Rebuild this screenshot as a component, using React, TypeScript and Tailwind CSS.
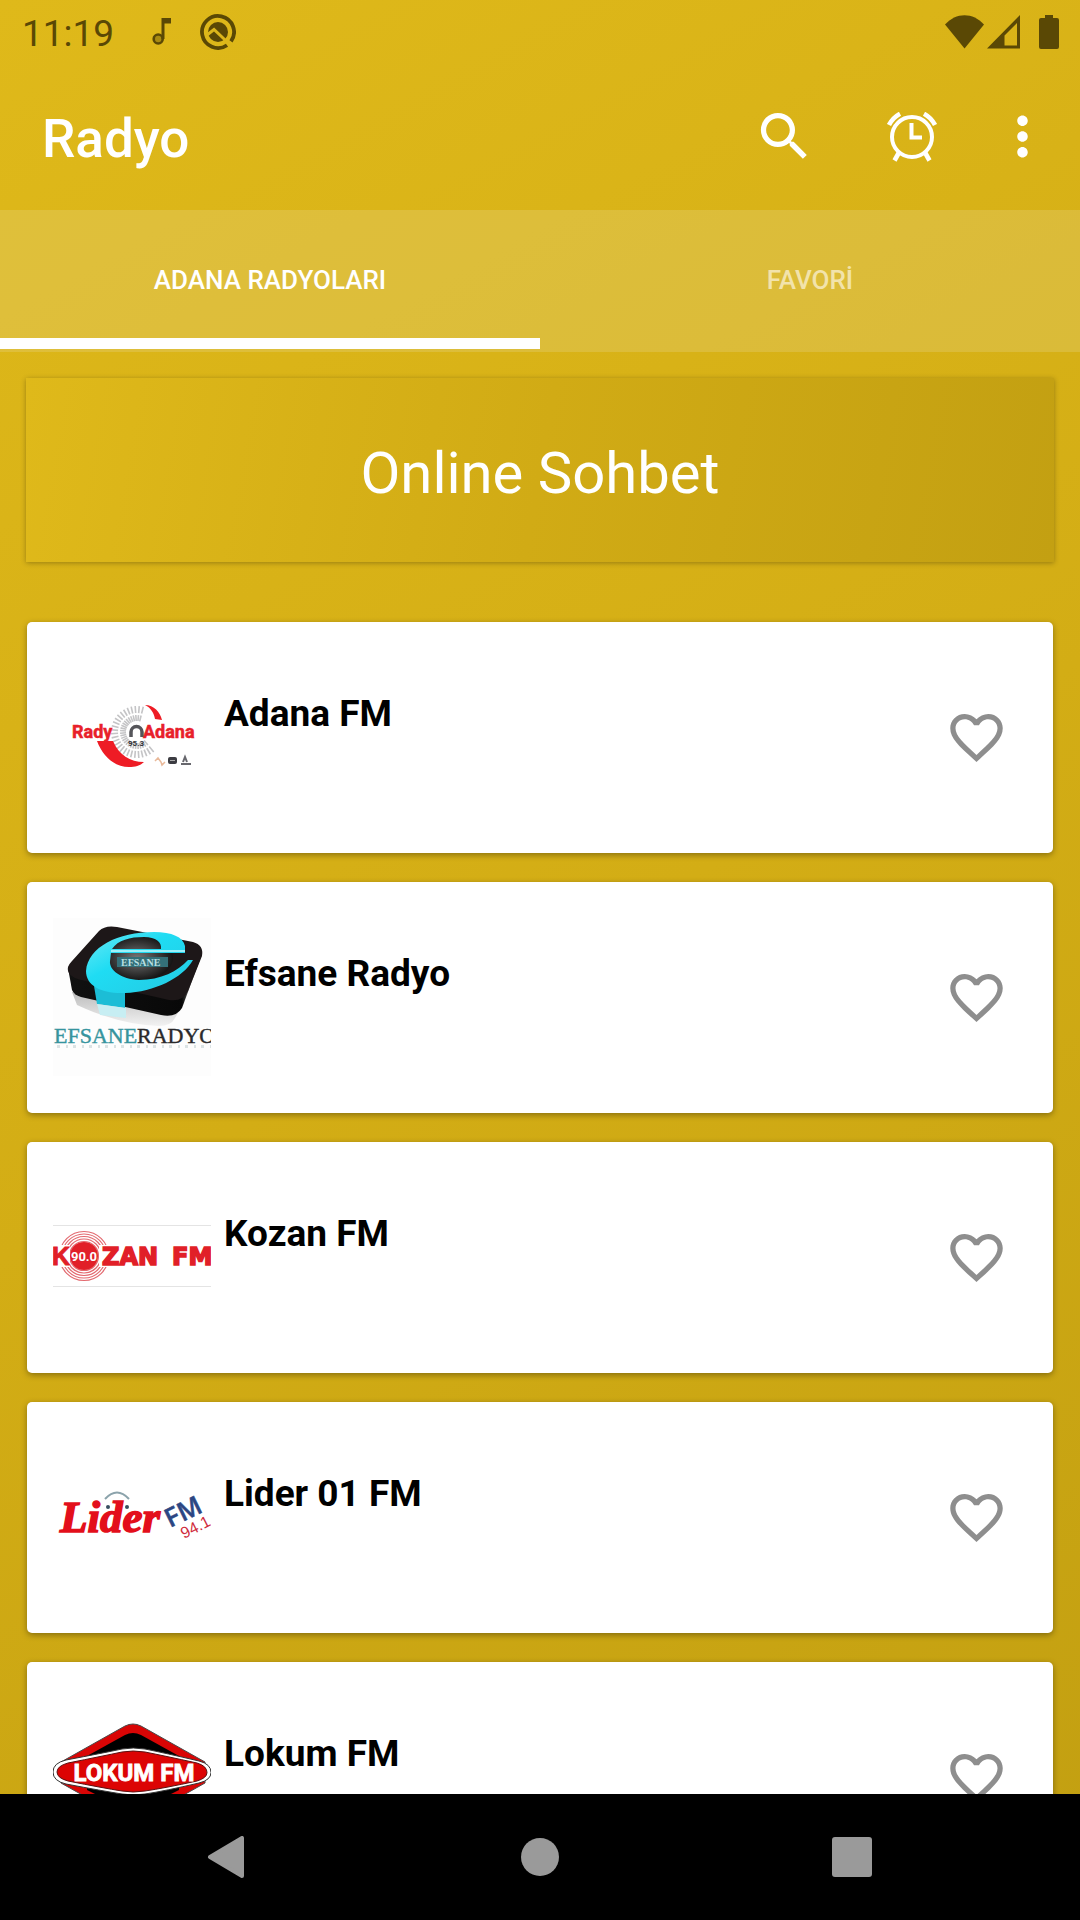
import { useState } from 'react';
import type { ReactNode } from 'react';
import { MdFavorite, MdFavoriteBorder, MdMoreVert, MdSearch } from 'react-icons/md';

interface Station {
  id: string;
  name: string;
  logo: ReactNode;
}

const fanTicks = Array.from({ length: 27 }, (_, i) => 50 + i * 9);

function AdanaLogo() {
  return (
    <svg viewBox="0 0 158 158" className="size-full" aria-hidden="true">
      <g stroke="#c4c4c6" strokeWidth="1.6">
        {fanTicks.map((deg) => (
          <g key={deg} transform={`rotate(${deg} 84 74)`}>
            <path d="M95 74h6M103 74h7" />
          </g>
        ))}
      </g>
      <path d="M44 83c6 16 18 26 32 26 6 0 11-1 15-5-14 0-25-7-31-21z" fill="#ee1c25" />
      <path d="M92 47c9 0 15 7 17 15l-7-1c-1-6-4-11-10-14z" fill="#ee1c25" />
      <path d="M78 79v-5a5 5 0 0 1 11 0v5" fill="none" stroke="#55555a" strokeWidth="3.500" />
      <text x="75" y="88" fill="#333338" className="font-['Roboto'] text-[8px] font-bold">
        95.3
      </text>
      <g fill="#e8202a" stroke="#e8202a" strokeWidth=".5" className="font-['Roboto'] text-[18px] font-bold">
        <text x="19" y="80">Rady</text>
        <text x="90" y="80">Adana</text>
      </g>
      <path d="M102 103l3-3 3 4 1 3 3-3" fill="none" stroke="#e9b99a" strokeWidth="1.5" />
      <rect x="115" y="99" width="9" height="7" rx="2" fill="#3c3c42" />
      <path d="M117 102.500h5" stroke="#aaa" />
      <path d="M128 106h10M130 104l2-5 2 5" stroke="#67676d" strokeWidth="2" fill="none" />
    </svg>
  );
}

function EfsaneLogo() {
  return (
    <svg viewBox="0 0 158 158" className="size-full" aria-hidden="true">
      <defs>
        <linearGradient id="efsaneCyan" x1="0" y1="0" x2="1" y2="1">
          <stop offset="0" stopColor="#6be9f5" />
          <stop offset=".4" stopColor="#1fdcf3" />
          <stop offset="1" stopColor="#25c9e2" />
        </linearGradient>
        <linearGradient id="efsaneSide" x1="0" y1="0" x2="1" y2="0">
          <stop offset="0" stopColor="#111" />
          <stop offset=".85" stopColor="#080808" />
          <stop offset=".93" stopColor="#777" />
          <stop offset="1" stopColor="#222" />
        </linearGradient>
        <linearGradient id="efsaneReflection" x1="0" y1="0" x2="0" y2="1">
          <stop offset="0" stopColor="#bcbcbc" />
          <stop offset="1" stopColor="#f2f2f2" />
        </linearGradient>
        <radialGradient id="efsaneCore">
          <stop offset="0" stopColor="#777" />
          <stop offset="1" stopColor="#141414" />
        </radialGradient>
      </defs>
      <rect width="158" height="158" fill="#fdfdfd" />
      <path d="M19 74L24 87C50 99 78 107 106 108Q118 108 122 100L128 90z" fill="url(#efsaneReflection)" />
      <path d="M15 50L19 72Q21 77 28 79L108 97Q123 100 129 90L149 36z" fill="url(#efsaneSide)" />
      <path
        d="M46 13Q52 7 64 9L140 24Q151 27 149 38L135 73Q130 84 116 82L28 62Q13 58 15 49Q16 46 19 43z"
        fill="#1d1718"
      />
      <ellipse cx="84" cy="40" rx="36" ry="23" fill="url(#efsaneCore)" />
      <path d="M41 68L44 86 72 90V72z" fill="#1cbdd6" />
      <path d="M44 86L47 97 73 100V90z" fill="#c7eef3" />
      <path
        fillRule="evenodd"
        d="M132 35V28C130 19 119 14 101 14C65 14 35 29 33 53C33 68 49 76 72 75C101 74 130 60 140 42L135 42C125 53 108 62 86 62C68 61 56 52 57 43L58 35zM59 31C65 22 77 19 91 19C103 19 109 24 108 31z"
        fill="url(#efsaneCyan)"
      />
      <path d="M58 33H132" stroke="#c5f8fc" strokeWidth="1.5" />
      <rect x="64" y="39" width="51" height="10" fill="#347078" />
      <text x="68" y="48" fill="#b8dfe2" className="font-['Liberation_Serif'] text-[10px] font-bold">
        EFSANE
      </text>
      <g strokeWidth=".4" className="font-['Liberation_Serif'] text-[22px]">
        <text x="1" y="125" fill="#36949e" stroke="#36949e">
          EFSANE
        </text>
        <text x="84" y="125" fill="#29292b" stroke="#29292b">
          RADYO
        </text>
      </g>
      <path d="M4 128.500H158" stroke="#8fa9ac" strokeWidth="3" strokeDasharray="3 6 2 5" opacity=".3" />
    </svg>
  );
}

function KozanLogo() {
  return (
    <svg viewBox="0 0 158 158" className="size-full" aria-hidden="true">
      <path d="M0 47.500H158M0 108.500H158" stroke="#e4e4e4" />
      <g fill="none" stroke="#e36a70" strokeWidth="1.2">
        <circle cx="31" cy="78" r="24.500" />
        <circle cx="31" cy="78" r="22" />
        <circle cx="31" cy="78" r="19.500" />
        <circle cx="31" cy="78" r="17" />
        <circle cx="31" cy="78" r="14.500" />
      </g>
      <path d="M0 67H17V89H0zM46 67H158V89H46z" fill="#fff" />
      <circle cx="31" cy="78" r="14" fill="#e11f28" />
      <g fill="#e11f28" stroke="#e11f28" className="font-['Liberation_Sans'] text-[25px] font-bold">
        <text x="-1" y="87">K</text>
        <g strokeWidth="1.6" className="font-['DejaVu_Sans'] text-[24px]">
          <text x="49" y="87">ZAN</text>
          <text x="119" y="87">FM</text>
        </g>
      </g>
      <text x="31" y="83" textAnchor="middle" fill="#fff" className="font-['Roboto'] text-[13px] font-bold">
        90.0
      </text>
    </svg>
  );
}

function LiderLogo() {
  return (
    <svg viewBox="0 0 158 158" className="size-full" aria-hidden="true">
      <path d="M52 61Q64 48 76 61" fill="none" stroke="#8ba3ab" strokeWidth="2" />
      <text
        x="7"
        y="94"
        fill="#e30f1b"
        stroke="#e30f1b"
        strokeWidth="1.6"
        className="font-['Liberation_Serif'] text-[45px] font-bold italic"
      >
        Lider
      </text>
      <circle cx="55" cy="69" r="2" fill="#384e60" />
      <circle cx="74" cy="69" r="2" fill="#384e60" />
      <g transform="translate(117 90) rotate(-26)">
        <text fill="#2b4683" stroke="#2b4683" strokeWidth=".5" className="font-['Open_Sans'] text-[26px] font-semibold">
          FM
        </text>
      </g>
      <g transform="translate(131 101) rotate(-27)">
        <text fill="#cf2a3b" className="font-['Liberation_Sans'] text-[16px]">
          94.1
        </text>
      </g>
    </svg>
  );
}

function LokumLogo() {
  return (
    <svg viewBox="0 0 158 158" className="size-full" aria-hidden="true">
      <path
        d="M72 28Q80 24 88 28L152 64V85L88 121Q80 125 72 121L8 85V64z"
        fill="#d90505"
        stroke="#4a4a4a"
        strokeWidth="1"
      />
      <path d="M72 37Q80 33 88 37L126 58V92L80 115 34 92V58z" fill="#000" />
      <path
        d="M13 62Q50 55 69 51Q80 49 92 51Q112 55 146 63Q158 66 158 74.500Q158 82 146 85Q112 93 92 96Q80 98 69 96Q50 93 13 86Q0 83 0 74Q0 65 13 62z"
        fill="#fff"
        stroke="#333"
        strokeWidth="1"
      />
      <path
        d="M15 65Q50 58 69 54Q80 52 92 54Q112 58 144 65Q154 68 154 74.500Q154 80 144 83Q112 90 92 93Q80 95 69 93Q50 90 15 83Q4 80 4 74Q4 68 15 65z"
        fill="#dc0404"
        stroke="#5b1111"
        strokeWidth="1"
      />
      <text
        x="81"
        y="83"
        textAnchor="middle"
        fill="#fff"
        stroke="#fff"
        strokeWidth=".8"
        className="font-['Roboto'] text-[24px] font-bold"
      >
        LOKUM FM
      </text>
    </svg>
  );
}

const stations: Station[] = [
  { id: 'adana', name: 'Adana FM', logo: <AdanaLogo /> },
  { id: 'efsane', name: 'Efsane Radyo', logo: <EfsaneLogo /> },
  { id: 'kozan', name: 'Kozan FM', logo: <KozanLogo /> },
  { id: 'lider', name: 'Lider 01 FM', logo: <LiderLogo /> },
  { id: 'lokum', name: 'Lokum FM', logo: <LokumLogo /> },
];

const tabs = [
  { id: 'all', label: 'ADANA RADYOLARI' },
  { id: 'favorites', label: 'FAVORİ' },
] as const;

function StatusBar() {
  return (
    <div className="flex h-[63px] shrink-0 items-center justify-between pr-[21px] pl-[22px] text-[#5a4805]">
      <div className="flex items-center">
        <span className="pt-1 text-[37px] leading-none">11:19</span>
        <svg viewBox="0 0 20 27" className="ml-[38px] h-[27px] w-5" aria-hidden="true">
          <circle cx="6.200" cy="21" r="4.500" fill="currentColor" fillOpacity=".4" stroke="currentColor" strokeWidth="2.600" />
          <path d="M9.500 0H19v5.500h-6.500V21h-3z" fill="currentColor" />
        </svg>
        <svg viewBox="0 0 36 36" className="ml-7 size-9" aria-hidden="true">
          <path d="M27 31.200A16 16 0 1 1 31 27.300" fill="none" stroke="currentColor" strokeWidth="3.800" />
          <circle cx="18" cy="18" r="10" fill="currentColor" />
          <path d="M7 21L14 15.500 32 32.500" fill="none" stroke="#dcb61b" strokeWidth="3" />
        </svg>
      </div>
      <div className="flex items-center">
        <svg viewBox="0 0 39 34" className="h-[34px] w-[39px]" aria-hidden="true">
          <path d="M0 9.500C11-3 28-3 39 9.500L19.500 33.500z" fill="currentColor" />
        </svg>
        <svg viewBox="0 0 33 34" className="ml-[3px] h-[34px] w-[33px]" aria-hidden="true">
          <path
            fillRule="evenodd"
            d="M33 0V33.500H0zM30 8L17.500 20.500V30.500H30z"
            fill="currentColor"
          />
        </svg>
        <svg viewBox="0 0 20 34" className="ml-[19px] h-[34px] w-5" aria-hidden="true">
          <path d="M6 0h8v3h4q2 0 2 2v27q0 2-2 2H2q-2 0-2-2V5q0-2 2-2h4z" fill="currentColor" />
        </svg>
      </div>
    </div>
  );
}

function AlarmIcon() {
  return (
    <svg
      viewBox="0 0 50 50"
      className="size-[50px]"
      fill="none"
      stroke="currentColor"
      strokeWidth="4"
      aria-hidden="true"
    >
      <circle cx="25" cy="25" r="20" />
      <path d="M24.500 11V25.500H35" />
      <path d="M2 13Q6 5.500 13 1.800M48 13Q44 5.500 37 1.800" strokeWidth="4.600" />
      <path d="M12 40.500L7.500 48.500M38 40.500L42.500 48.500" strokeWidth="4.600" />
    </svg>
  );
}

function AppBar() {
  return (
    <header className="flex h-[147px] shrink-0 items-center pr-[11px] pl-[42px]">
      <h1 className="flex-1 pt-[5px] text-[53px] leading-none font-medium">Radyo</h1>
      <button type="button" aria-label="Ara" className="flex h-32 w-32 items-center justify-center">
        <MdSearch className="size-[63px]" />
      </button>
      <button type="button" aria-label="Alarm" className="flex h-32 w-32 items-center justify-center">
        <AlarmIcon />
      </button>
      <button type="button" aria-label="Menü" className="flex h-32 w-[93px] items-center justify-center">
        <MdMoreVert className="size-[63px]" />
      </button>
    </header>
  );
}

function NavBar() {
  return (
    <nav className="flex h-[126px] shrink-0 bg-black px-[72px] text-[#9a9a9a]">
      <button type="button" aria-label="Geri" className="flex flex-1 items-center justify-center">
        <svg viewBox="0 0 42 42" className="size-[42px]" aria-hidden="true">
          <path
            d="M3 21L35 2V40z"
            fill="currentColor"
            stroke="currentColor"
            strokeWidth="4"
            strokeLinejoin="round"
          />
        </svg>
      </button>
      <button type="button" aria-label="Ana ekran" className="flex flex-1 items-center justify-center">
        <span className="size-[38px] rounded-full bg-current" />
      </button>
      <button type="button" aria-label="Son uygulamalar" className="flex flex-1 items-center justify-center">
        <span className="size-10 rounded-[3px] bg-current" />
      </button>
    </nav>
  );
}

interface StationCardProps {
  station: Station;
  favorite: boolean;
  onToggle: () => void;
}

function StationCard({ station, favorite, onToggle }: StationCardProps) {
  const Heart = favorite ? MdFavorite : MdFavoriteBorder;

  return (
    <li className="flex h-[231px] shrink-0 items-center rounded-[5px] bg-white pr-[45px] pb-px pl-[26px] shadow-[0_2px_6px_rgba(0,0,0,0.35)]">
      <div className="size-[158px] shrink-0">{station.logo}</div>
      <h2 className="ml-[13px] h-[158px] flex-1 pt-[33px] text-[37px] leading-[46px] font-bold text-black">
        {station.name}
      </h2>
      <button type="button" aria-label="Favori" aria-pressed={favorite} onClick={onToggle}>
        <Heart className="size-[63px] text-[#8e8e8e]" />
      </button>
    </li>
  );
}

export default function App() {
  const [activeTab, setActiveTab] = useState<'all' | 'favorites'>('all');
  const [favorites, setFavorites] = useState<string[]>([]);

  const toggleFavorite = (id: string) => {
    setFavorites((prev) => (prev.includes(id) ? prev.filter((x) => x !== id) : [...prev, id]));
  };

  const visible = activeTab === 'all' ? stations : stations.filter((s) => favorites.includes(s.id));

  return (
    <div className="flex h-screen flex-col overflow-hidden bg-[linear-gradient(151deg,#dfb91a_0%,#d3ad15_50%,#c29f11_100%)] font-['Roboto',sans-serif] text-white">
      <StatusBar />
      <AppBar />
      <div role="tablist" className="flex shrink-0 bg-[#e9dc9f]/25 pb-[3px]">
        {tabs.map((tab) => (
          <button
            key={tab.id}
            type="button"
            role="tab"
            aria-selected={activeTab === tab.id}
            onClick={() => setActiveTab(tab.id)}
            className="relative h-[139px] flex-1 pt-0.5 text-[26px] font-medium text-[#f2e3ab] aria-selected:text-white"
          >
            {tab.label}
            {activeTab === tab.id && <span className="absolute inset-x-0 bottom-0 h-[11px] bg-white" />}
          </button>
        ))}
      </div>
      <main className="min-h-0 flex-1 overflow-y-auto px-[26px] pt-[26px] [scrollbar-width:none]">
        <a
          href="#sohbet"
          className="flex h-[184px] items-center justify-center bg-[linear-gradient(100deg,#dfb91a_0%,#d1ab15_50%,#c3a012_100%)] pt-1.5 text-[58px] shadow-[0_1px_5px_rgba(0,0,0,0.3)]"
        >
          Online Sohbet
        </a>
        <ul className="mt-[60px] flex flex-col gap-[29px] px-px">
          {visible.map((station) => (
            <StationCard
              key={station.id}
              station={station}
              favorite={favorites.includes(station.id)}
              onToggle={() => toggleFavorite(station.id)}
            />
          ))}
        </ul>
      </main>
      <NavBar />
    </div>
  );
}
